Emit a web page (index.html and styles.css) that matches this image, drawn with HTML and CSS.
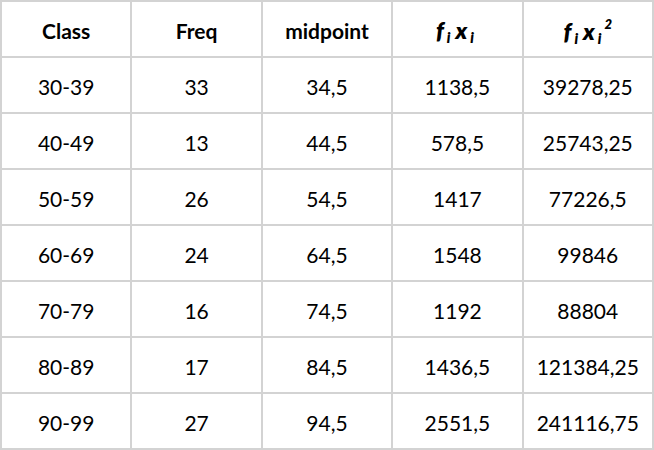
FILE: index.html
```html
<!DOCTYPE html>
<html>
<head>
<meta charset="utf-8">
<link rel="stylesheet" href="styles.css">
</head>
<body>
<div class="table">
  <div class="cell head">Class</div>
  <div class="cell head">Freq</div>
  <div class="cell head">midpoint</div>
  <div class="cell head"><span class="math"><span class="v">f</span><sub>i</sub><span class="v">x</span><sub>i</sub></span></div>
  <div class="cell head"><span class="math"><span class="v">f</span><sub>i</sub><span class="v">x</span><sub>i</sub><sup>2</sup></span></div>

  <div class="cell">30-39</div><div class="cell">33</div><div class="cell">34,5</div><div class="cell">1138,5</div><div class="cell">39278,25</div>
  <div class="cell">40-49</div><div class="cell">13</div><div class="cell">44,5</div><div class="cell">578,5</div><div class="cell">25743,25</div>
  <div class="cell">50-59</div><div class="cell">26</div><div class="cell">54,5</div><div class="cell">1417</div><div class="cell">77226,5</div>
  <div class="cell">60-69</div><div class="cell">24</div><div class="cell">64,5</div><div class="cell">1548</div><div class="cell">99846</div>
  <div class="cell">70-79</div><div class="cell">16</div><div class="cell">74,5</div><div class="cell">1192</div><div class="cell">88804</div>
  <div class="cell">80-89</div><div class="cell">17</div><div class="cell">84,5</div><div class="cell">1436,5</div><div class="cell">121384,25</div>
  <div class="cell">90-99</div><div class="cell">27</div><div class="cell">94,5</div><div class="cell">2551,5</div><div class="cell">241116,75</div>
</div>
</body>
</html>
```
FILE: styles.css
```css
html, body {
  margin: 0;
  padding: 0;
  background: #ffffff;
}
.table {
  width: 654px;
  height: 450px;
  box-sizing: border-box;
  display: grid;
  grid-template-columns: repeat(5, 1fr);
  grid-template-rows: repeat(8, 1fr);
  gap: 2px;
  padding: 2px;
  background: #d3d3d3;
  font-family: Lato, "Open Sans", sans-serif;
  font-size: 21px;
  color: #000;
}
.cell {
  background: #fff;
  display: flex;
  align-items: center;
  justify-content: center;
  padding-top: 2px;
  box-sizing: border-box;
}
.head {
  font-weight: 700;
}
.math {
  display: inline-block;
  font-style: italic;
  font-weight: 800;
  line-height: 1;
  padding-top: 4px;
}
.math .v {
  font-size: 23px;
}
.math sub {
  font-size: 14px;
  vertical-align: -4px;
  line-height: 1;
  margin: 0 5px 0 3px;
}
.math sup {
  font-size: 13px;
  vertical-align: 11px;
  line-height: 1;
  margin-left: -2px;
}
```
